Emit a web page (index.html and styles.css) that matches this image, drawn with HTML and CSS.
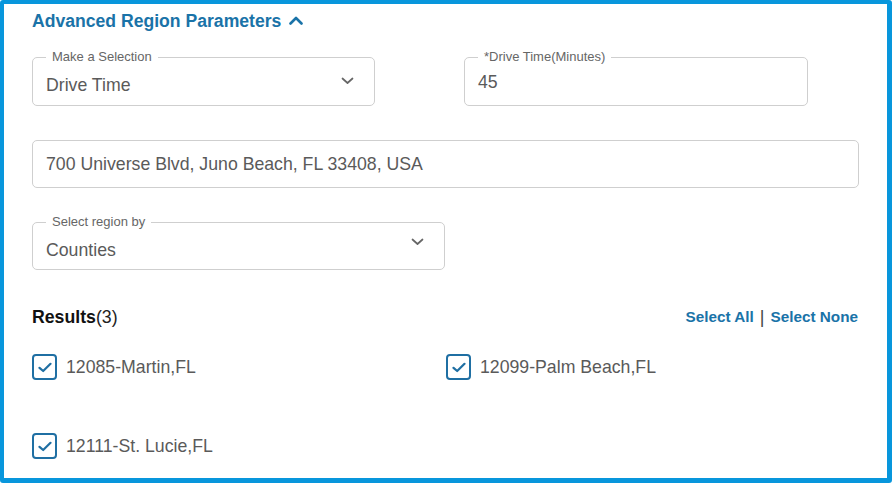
FILE: index.html
```html
<!DOCTYPE html>
<html>
<head>
<meta charset="utf-8">
<link rel="stylesheet" href="styles.css">
</head>
<body>
<div class="frame">
  <div class="content">
    <div class="title">
      <span>Advanced Region Parameters</span>
      <svg class="chev-up" width="14" height="9" viewBox="0 0 14 9"><path d="M1.5 7.5 L7 2 L12.5 7.5" fill="none" stroke="#1a73a8" stroke-width="2.6" stroke-linecap="round" stroke-linejoin="round"/></svg>
    </div>

    <div class="row-two">
      <div class="field select w344">
        <span class="flabel">Make a Selection</span>
        <span class="value">Drive Time</span>
        <svg class="chev" width="13" height="8" viewBox="0 0 13 8"><path d="M1.5 1.5 L6.5 6 L11.5 1.5" fill="none" stroke="#666" stroke-width="1.7" stroke-linecap="round" stroke-linejoin="round"/></svg>
      </div>
      <div class="field input w345">
        <span class="flabel">*Drive Time(Minutes)</span>
        <span class="value">45</span>
      </div>
    </div>

    <div class="field plain full">
      <span class="value">700 Universe Blvd, Juno Beach, FL 33408, USA</span>
    </div>

    <div class="field select region">
      <span class="flabel">Select region by</span>
      <span class="value">Counties</span>
      <svg class="chev" width="13" height="8" viewBox="0 0 13 8"><path d="M1.5 1.5 L6.5 6 L11.5 1.5" fill="none" stroke="#666" stroke-width="1.7" stroke-linecap="round" stroke-linejoin="round"/></svg>
    </div>

    <div class="results-head">
      <div class="results-title"><b>Results</b>(3)</div>
      <div class="links"><a>Select All</a><span class="sep">|</span><a>Select None</a></div>
    </div>

    <div class="results">
      <label class="item"><span class="cb"><svg width="14" height="11" viewBox="0 0 14 11"><path d="M1.5 5.8 L5.2 9 L12.5 1.8" fill="none" stroke="#1f6fa3" stroke-width="2.2" stroke-linecap="round" stroke-linejoin="round"/></svg></span><span>12085-Martin,FL</span></label>
      <label class="item"><span class="cb"><svg width="14" height="11" viewBox="0 0 14 11"><path d="M1.5 5.8 L5.2 9 L12.5 1.8" fill="none" stroke="#1f6fa3" stroke-width="2.2" stroke-linecap="round" stroke-linejoin="round"/></svg></span><span>12099-Palm Beach,FL</span></label>
      <label class="item"><span class="cb"><svg width="14" height="11" viewBox="0 0 14 11"><path d="M1.5 5.8 L5.2 9 L12.5 1.8" fill="none" stroke="#1f6fa3" stroke-width="2.2" stroke-linecap="round" stroke-linejoin="round"/></svg></span><span>12111-St. Lucie,FL</span></label>
    </div>
  </div>
</div>
</body>
</html>
```

FILE: styles.css
```css
* { box-sizing: border-box; }
html, body { margin: 0; padding: 0; background: #fff; }
body { font-family: "Liberation Sans", Arial, sans-serif; }

.frame {
  width: 892px;
  height: 483px;
  border-style: solid;
  border-color: #0896dc;
  border-width: 4px 5px 5px 4px;
  border-radius: 3px;
  overflow: hidden;
  background: #fff;
}

.content {
  padding: 5px 28px 0 28px;
  display: flex;
  flex-direction: column;
}

.title {
  display: flex;
  align-items: center;
  gap: 8px;
  height: 24px;
  font-size: 17.6px;
  font-weight: bold;
  color: #1a73a8;
}
.chev-up { margin-top: -2px; }

.row-two {
  display: flex;
  gap: 89px;
  margin-top: 24px;
}

.field {
  position: relative;
  border: 1px solid #cfcfcf;
  border-radius: 5px;
  height: 49px;
  display: flex;
  align-items: center;
  padding-left: 13px;
  font-size: 17.7px;
  color: #5a5a5a;
}
.w344 { width: 343px; }
.w345 { width: 344px; }
.full { width: 827px; height: 48px; margin-top: 34px; }
.region { width: 413px; height: 48px; margin-top: 34px; }

.select { padding-top: 7px; padding-right: 20px; justify-content: space-between; }
.region.select { padding-top: 8px; padding-right: 20px; }
.input { padding-top: 1px; }

.select .chev { margin-top: -9px; }
.region .chev { margin-top: -16px; }

.flabel {
  position: absolute;
  top: -9px;
  left: 13px;
  padding: 0 6px;
  background: #fff;
  font-size: 13px;
  line-height: 16px;
  color: #666;
}

.results-head {
  display: flex;
  justify-content: space-between;
  align-items: center;
  width: 826px;
  height: 20px;
  margin-top: 37px;
}
.results-title { font-size: 17.7px; color: #222; }
.results-title b { color: #111; }
.links { font-size: 15.3px; font-weight: bold; color: #1a73a8; display: flex; align-items: center; }
.links .sep { color: #444; font-weight: normal; font-size: 18px; margin: 0 6px; }

.results {
  display: grid;
  grid-template-columns: 414px 414px;
  row-gap: 53px;
  margin-top: 27px;
}
.item {
  display: flex;
  align-items: center;
  gap: 9px;
  font-size: 17.7px;
  color: #5a5a5a;
}
.cb {
  width: 25px;
  height: 26px;
  border: 2px solid #1f6fa3;
  border-radius: 4px;
  display: flex;
  align-items: center;
  justify-content: center;
}
```
